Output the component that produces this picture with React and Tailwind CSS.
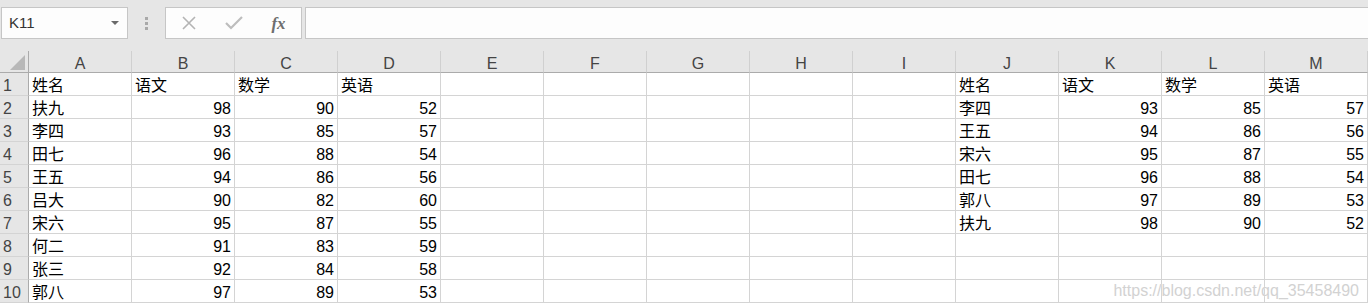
import React from 'react'

const COLS = ['A', 'B', 'C', 'D', 'E', 'F', 'G', 'H', 'I', 'J', 'K', 'L', 'M']

const left = [
  ['姓名', '语文', '数学', '英语'],
  ['扶九', 98, 90, 52],
  ['李四', 93, 85, 57],
  ['田七', 96, 88, 54],
  ['王五', 94, 86, 56],
  ['吕大', 90, 82, 60],
  ['宋六', 95, 87, 55],
  ['何二', 91, 83, 59],
  ['张三', 92, 84, 58],
  ['郭八', 97, 89, 53],
]

const right = [
  ['姓名', '语文', '数学', '英语'],
  ['李四', 93, 85, 57],
  ['王五', 94, 86, 56],
  ['宋六', 95, 87, 55],
  ['田七', 96, 88, 54],
  ['郭八', 97, 89, 53],
  ['扶九', 98, 90, 52],
]

function cellValue(row, col) {
  if (col < 4) return left[row]?.[col]
  if (col >= 9) return right[row]?.[col - 9]
  return undefined
}

function Toolbar() {
  return (
    <div className="h-[51px] bg-[#e6e6e6] flex items-start pt-[7px]">
      <div className="ml-[1px] w-[127px] h-[32px] border border-[#c6c6c6] bg-[#fdfdfd] flex items-center justify-between pl-[7px] pr-[8px]">
        <span className="text-[15px] text-[#333]">K11</span>
        <svg width="8" height="4" viewBox="0 0 8 4">
          <path d="M0 0 L8 0 L4 4 Z" fill="#6a6a6a" />
        </svg>
      </div>
      <div className="w-[37px] h-[32px] flex flex-col items-center justify-center gap-[2px]">
        <div className="w-[3px] h-[3px] bg-[#a9a9a9]" />
        <div className="w-[3px] h-[3px] bg-[#a9a9a9]" />
        <div className="w-[3px] h-[3px] bg-[#a9a9a9]" />
      </div>
      <div className="w-[137px] h-[32px] border border-[#c6c6c6] bg-[#fdfdfd] flex items-center">
        <div className="w-[45px] flex justify-center">
          <svg width="16" height="16" viewBox="0 0 16 16">
            <path d="M2 2 L14 14 M14 2 L2 14" stroke="#b4b4b4" strokeWidth="1.6" />
          </svg>
        </div>
        <div className="w-[45px] flex justify-center">
          <svg width="18" height="14" viewBox="0 0 18 14">
            <path d="M1 7 L6 12 L17 1" stroke="#bdbdbd" strokeWidth="2.2" fill="none" />
          </svg>
        </div>
        <div className="w-[45px] flex justify-center">
          <span className="text-[17px] italic font-bold text-[#6e6e6e] leading-none" style={{ fontFamily: '"Liberation Serif", serif' }}>
            fx
          </span>
        </div>
      </div>
      <div className="ml-[3px] flex-1 h-[32px] border border-[#c6c6c6] border-r-0 bg-[#fdfdfd]" />
    </div>
  )
}

export default function App() {
  const rows = Array.from({ length: 10 }, (_, i) => i)

  return (
    <div
      className="relative w-[1368px] h-[304px] overflow-hidden bg-white"
      style={{ fontFamily: '"Liberation Sans", "Noto Sans CJK SC", sans-serif' }}
    >
      <Toolbar />
      <div className="grid grid-cols-[29px_repeat(13,103px)]">
        {/* corner */}
        <div className="h-[22px] bg-[#e6e6e6] border-r border-b border-[#ababab] flex items-end justify-end pr-[3px] pb-[2px]">
          <svg width="15" height="15" viewBox="0 0 15 15">
            <path d="M15 0 L15 15 L0 15 Z" fill="#b8b8b8" />
          </svg>
        </div>
        {COLS.map((c) => (
          <div
            key={c}
            className="h-[22px] bg-[#e6e6e6] border-r border-r-[#d0d0d0] border-b border-b-[#ababab] flex items-center justify-center text-[16px] text-[#444] leading-none pt-[4px]"
          >
            {c}
          </div>
        ))}

        {rows.map((r) => (
          <React.Fragment key={r}>
            <div className="h-[23px] bg-[#e6e6e6] border-r border-r-[#ababab] border-b border-b-[#d4d4d4] flex items-end pb-[1px] pl-[3px] text-[16px] text-[#444] leading-none">
              {r + 1}
            </div>
            {COLS.map((c, ci) => {
              const v = cellValue(r, ci)
              const isNum = typeof v === 'number'
              return (
                <div
                  key={c}
                  className={`h-[23px] border-r border-b border-[#d4d4d4] flex items-end pb-[1px] text-[16px] text-black leading-none overflow-hidden whitespace-nowrap ${
                    isNum ? 'justify-end pr-[3px]' : 'justify-start pl-[3px]'
                  }`}
                >
                  {v}
                </div>
              )
            })}
          </React.Fragment>
        ))}
      </div>
      <div
        className="absolute right-[9px] top-[283px] text-[16px] text-[#d2d2d2] leading-none"
        style={{ textShadow: '0 0 1px #ffffff' }}
      >
        https://blog.csdn.net/qq_35458490
      </div>
    </div>
  )
}
